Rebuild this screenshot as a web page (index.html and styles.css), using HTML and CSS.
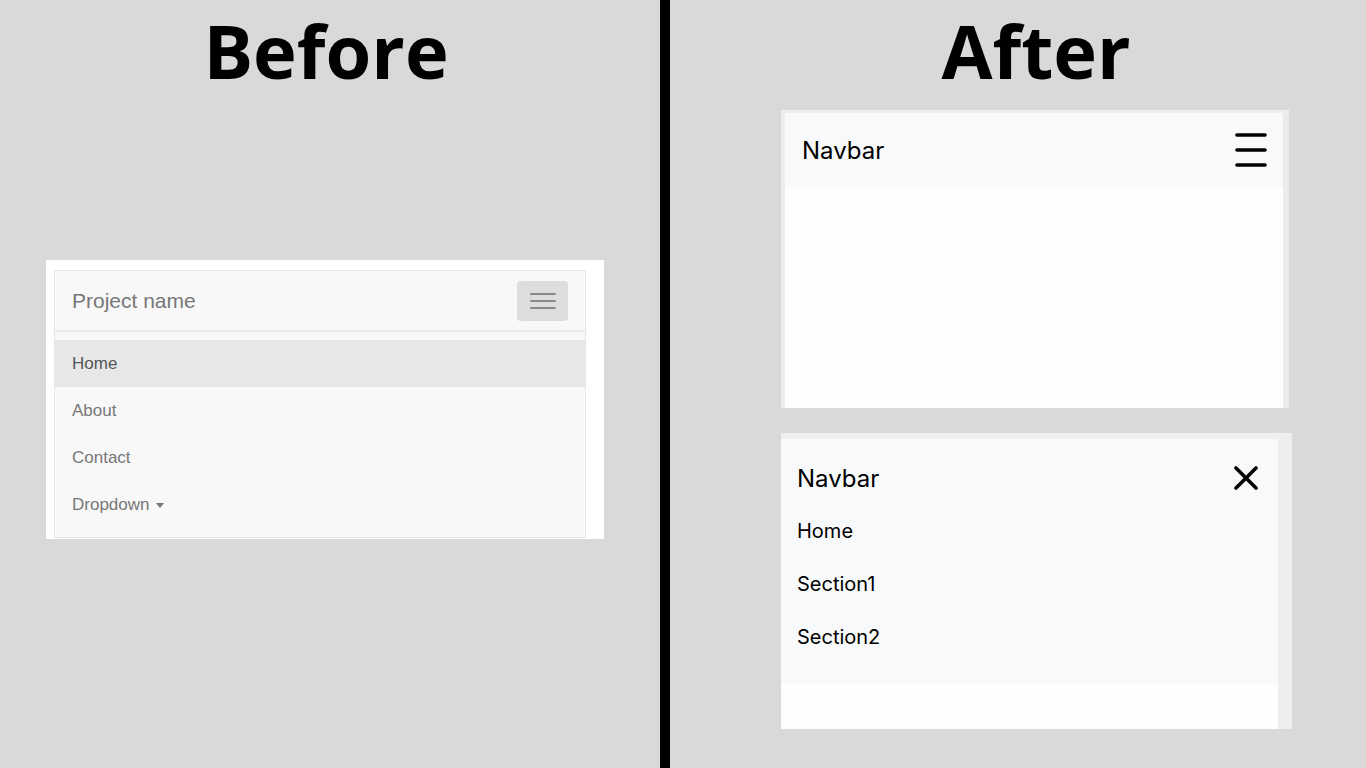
FILE: index.html
```html
<!DOCTYPE html>
<html lang="en">
<head>
<meta charset="utf-8">
<title>Before / After navbar</title>
<link rel="stylesheet" href="styles.css">
</head>
<body>
  <section class="panel panel-before">
    <h1 class="title title-before">Before</h1>
    <div class="before-card">
      <nav class="bs-navbar">
        <div class="bs-header">
          <span class="bs-brand">Project name</span>
          <button class="bs-toggle" type="button" aria-label="Toggle navigation">
            <span class="bs-bar"></span>
            <span class="bs-bar"></span>
            <span class="bs-bar"></span>
          </button>
        </div>
        <ul class="bs-menu">
          <li class="bs-item active">Home</li>
          <li class="bs-item">About</li>
          <li class="bs-item">Contact</li>
          <li class="bs-item">Dropdown <span class="caret"></span></li>
        </ul>
      </nav>
    </div>
  </section>

  <div class="divider"></div>

  <section class="panel panel-after">
    <h1 class="title title-after">After</h1>

    <div class="after-card closed">
      <div class="after-header">
        <span class="after-brand">Navbar</span>
        <svg class="icon-burger" width="32" height="34" viewBox="0 0 32 34" aria-hidden="true">
          <line x1="2" y1="2" x2="30" y2="2"/>
          <line x1="2" y1="17" x2="30" y2="17"/>
          <line x1="2" y1="32" x2="30" y2="32"/>
        </svg>
      </div>
      <div class="after-body"></div>
    </div>

    <div class="after-card open">
      <div class="after-header-open">
        <div class="after-top">
          <span class="after-brand">Navbar</span>
          <svg class="icon-close" width="24" height="24" viewBox="0 0 24 24" aria-hidden="true">
            <line x1="2" y1="2" x2="22" y2="22"/>
            <line x1="22" y1="2" x2="2" y2="22"/>
          </svg>
        </div>
        <ul class="after-menu">
          <li class="after-item">Home</li>
          <li class="after-item">Section1</li>
          <li class="after-item">Section2</li>
        </ul>
      </div>
      <div class="after-body-open"></div>
    </div>
  </section>
</body>
</html>
```

FILE: styles.css
```css
html, body {
  margin: 0;
  padding: 0;
}

body {
  width: 1366px;
  height: 768px;
  overflow: hidden;
  background: #d9d9d9;
  display: flex;
  font-family: "Liberation Sans", Arial, sans-serif;
}

.panel {
  display: flex;
  flex-direction: column;
}

.panel-before {
  width: 660px;
}

.divider {
  width: 10px;
  background: #000;
}

.panel-after {
  flex: 1;
}

.title {
  margin: 0;
  height: 95px;
  font-family: "Open Sans", "DejaVu Sans", sans-serif;
  font-weight: 700;
  font-size: 74px;
  line-height: normal;
  color: #000;
  text-align: center;
}

.title-before {
  padding-right: 8px;
}

.title-after {
  padding-left: 36px;
  width: 660px;
}

/* ---------- Before ---------- */
.before-card {
  margin: 165px 0 0 46px;
  width: 558px;
  height: 279px;
  box-sizing: border-box;
  background: #fff;
  padding: 10px 18px 1px 8px;
}

.bs-navbar {
  height: 268px;
  box-sizing: border-box;
  background: #f8f8f8;
  border: 1px solid #e7e7e7;
}

.bs-header {
  height: 59px;
  border-bottom: 1px solid #e7e7e7;
  display: flex;
  align-items: center;
  justify-content: space-between;
  padding-left: 17px;
  padding-right: 17px;
}

.bs-brand {
  font-size: 21px;
  color: #777;
}

.bs-toggle {
  width: 51px;
  height: 40px;
  border: none;
  border-radius: 4px;
  background: #ddd;
  display: flex;
  flex-direction: column;
  align-items: center;
  justify-content: center;
  gap: 5px;
  padding: 0;
}

.bs-bar {
  display: block;
  width: 26px;
  height: 2px;
  border-radius: 1px;
  background: #888;
}

.bs-menu {
  list-style: none;
  margin: 0;
  padding: 8px 0 0;
  border-top: 1px solid #ececec;
}

.bs-item {
  height: 47px;
  line-height: 47px;
  padding-left: 17px;
  font-size: 17px;
  color: #777;
}

.bs-item.active {
  background: #e7e7e7;
  color: #555;
}

.caret {
  display: inline-block;
  width: 0;
  height: 0;
  margin-left: 2px;
  vertical-align: middle;
  border-top: 5px solid #777;
  border-left: 4px solid transparent;
  border-right: 4px solid transparent;
}

/* ---------- After ---------- */
.after-card {
  margin-left: 111px;
  box-sizing: border-box;
  background: #fff;
  font-family: Inter, "Noto Sans", sans-serif;
}

.after-card.closed {
  margin-top: 15px;
  width: 508px;
  height: 298px;
  border-top: 3px solid #eeeeee;
  border-left: 4px solid #eeeeee;
  border-right: 6px solid #ececec;
  display: flex;
  flex-direction: column;
}

.after-header {
  height: 74px;
  background: #f8f9fa;
  display: flex;
  align-items: center;
  justify-content: space-between;
  padding: 0 16px 0 17px;
}

.after-brand {
  font-size: 24px;
  color: #000;
}

.icon-burger line,
.icon-close line {
  stroke: #000;
  stroke-width: 3.6;
  stroke-linecap: round;
}

.after-body {
  flex: 1;
  background: #fefefe;
}

.after-card.open {
  margin-top: 25px;
  width: 511px;
  height: 296px;
  border-top: 6px solid #efefef;
  border-right: 14px solid #eeeeee;
  display: flex;
  flex-direction: column;
}

.after-header-open {
  height: 245px;
  background: #f8f9fa;
  padding: 12px 20px 0 16px;
  box-sizing: border-box;
}

.after-top {
  height: 54px;
  display: flex;
  align-items: center;
  justify-content: space-between;
}

.after-menu {
  list-style: none;
  margin: 0;
  padding: 0;
}

.after-item {
  height: 53px;
  line-height: 53px;
  font-size: 20px;
  color: #000;
}

.after-body-open {
  flex: 1;
  background: #fefefe;
}
```
